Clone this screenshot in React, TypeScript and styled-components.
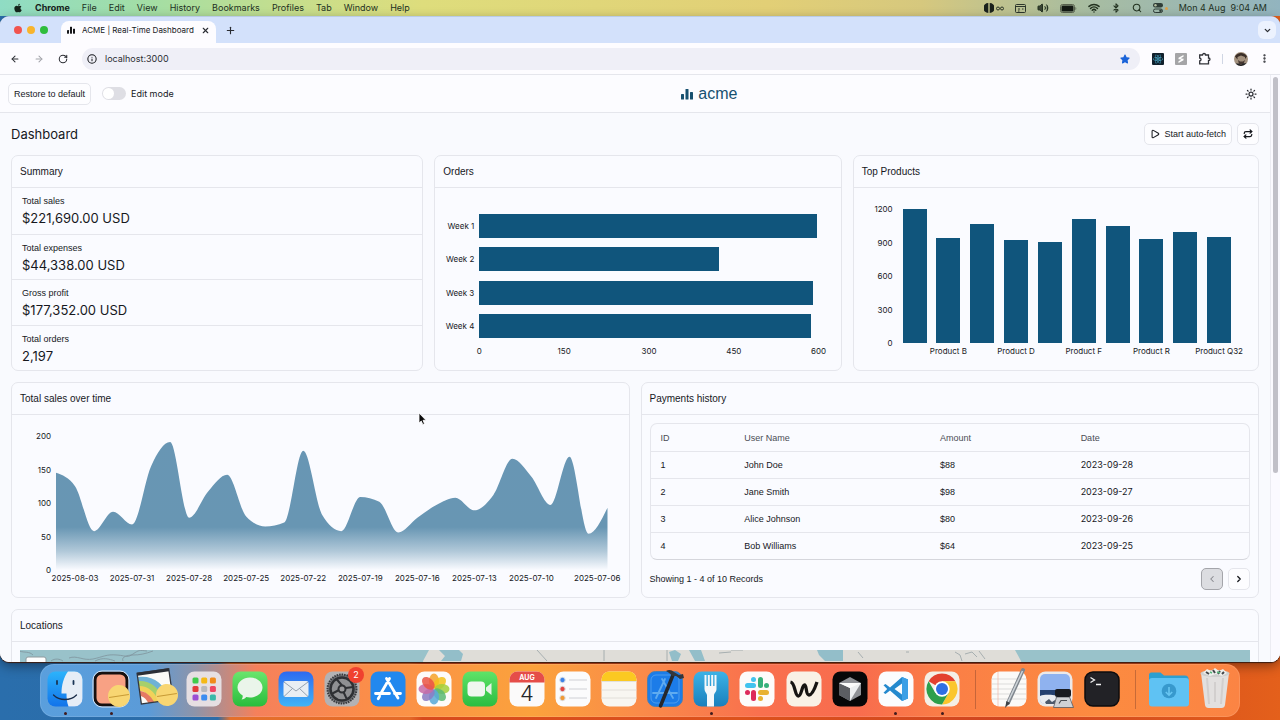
import React from 'react';
import styled, { createGlobalStyle } from 'styled-components';
import { FaApple, FaReact, FaStar } from 'react-icons/fa';
import { ArrowLeft, ArrowRight, RotateCw, Info, X, Plus, ChevronDown, ChevronLeft, ChevronRight, Play, Repeat, Sun, Search, Bluetooth, Wifi, Volume2, MoreVertical } from 'lucide-react';

const ink = '#16181d';
const line = '#e5e6ec';
const brand = '#10557c';
const textFont = '"Liberation Sans", Arial, sans-serif';

const GlobalStyle = createGlobalStyle`
  * { box-sizing: border-box; }
  body { margin: 0; font-family: Inter, "Liberation Sans", sans-serif; color: ${ink}; }
  button { font: inherit; color: inherit; padding: 0; cursor: pointer; }
  h1, h2, p, dl, dd { margin: 0; font-weight: 400; }
  a { color: inherit; text-decoration: none; }
  svg { display: block; flex: none; }
`;

/* ---------- desktop ---------- */

const Desktop = styled.div`
  position: relative;
  height: 100vh;
  min-height: 480px;
  display: flex;
  flex-direction: column;
  overflow: hidden;
  padding-bottom: 3px;
  background:
    linear-gradient(90deg, #2a6eac 0, #2c6ca8 17%, #e5702b 18%, #e46a28 32%, #d84a1c 33%, #dd521c 58%, #cf4420 80%, #e4601b 100%);
`;

const MenuBar = styled.header`
  display: flex;
  justify-content: space-between;
  align-items: center;
  height: 16px;
  flex: none;
  padding: 0 13px;
  font-size: 9px;
  line-height: 16px;
  color: #22311f;
  background: linear-gradient(90deg, #8fdcc4 0, #a4dea4 12%, #c4de8e 22%, #dedd7c 33%, #e2cf76 60%, #d6c87e 72%, #a9bd9f 84%, #92b4bf 100%);
`;

const MenuGroup = styled.nav`
  display: flex;
  align-items: center;
  gap: 12px;
  a:first-of-type { font-weight: 700; color: #14201a; }
`;

const StatusGroup = styled.div`
  display: flex;
  align-items: center;
  gap: 11px;
`;

const StatusPair = styled.div`
  display: flex;
  align-items: center;
  gap: 2px;
`;

const Clock = styled.time`
  white-space: pre;
`;

/* ---------- browser ---------- */

const BrowserWindow = styled.div`
  flex: 1;
  min-height: 0;
  display: flex;
  flex-direction: column;
  overflow: hidden;
  border-radius: 9px;
  border-top: 1px solid #b9cbe6;
  background: #fdfcff;
  box-shadow: 0 1px 1px #3b1c10, 0 4px 12px rgba(0, 0, 0, 0.4);
`;

const TabStrip = styled.div`
  display: flex;
  align-items: flex-end;
  justify-content: space-between;
  height: 26px;
  flex: none;
  padding: 0 4px 0 14px;
  background: #d3e1fb;
`;

const TabArea = styled.div`
  display: flex;
  align-items: flex-end;
`;

const Lights = styled.div`
  display: flex;
  gap: 5px;
  height: 26px;
  align-items: center;
  margin-right: 13px;
`;

const Light = styled.button<{ $tone: string }>`
  width: 8px;
  height: 8px;
  border: 0;
  border-radius: 50%;
  background: ${p => p.$tone};
`;

const Tab = styled.div`
  display: flex;
  align-items: center;
  gap: 7px;
  height: 22px;
  padding: 0 6px 4px;
  border-radius: 8px 8px 0 0;
  background: #fdfcff;
  font-size: 8px;
  white-space: nowrap;
`;

const PlainButton = styled.button`
  display: flex;
  align-items: center;
  justify-content: center;
  border: 0;
  background: none;
  color: #2b2d33;
`;

const NewTab = styled(PlainButton)`
  height: 26px;
  margin-left: 9px;
`;

const TabSearch = styled(PlainButton)`
  width: 18px;
  height: 18px;
  margin-bottom: 4px;
  border-radius: 6px;
  background: #ecf2fe;
`;

const Toolbar = styled.div`
  display: flex;
  align-items: center;
  height: 32px;
  flex: none;
  padding: 0 10px 0 10px;
  border-bottom: 1px solid ${line};
`;

const NavButtons = styled.div`
  display: flex;
  gap: 14px;
  margin-right: 14px;
`;

const AddressBar = styled.label`
  flex: 1;
  display: flex;
  align-items: center;
  gap: 8px;
  height: 22px;
  padding: 0 10px 0 5px;
  border-radius: 11px;
  background: #efeff7;
`;

const AddressInput = styled.input`
  flex: 1;
  min-width: 0;
  border: 0;
  outline: 0;
  padding: 0;
  background: none;
  color: #2c2e34;
  font: 9px Inter, sans-serif;
`;

const Extensions = styled.div`
  display: flex;
  align-items: center;
  gap: 11px;
  margin-left: 12px;
`;

const ToolDivider = styled.span`
  width: 1px;
  height: 10px;
  background: #d0d6e4;
`;

/* ---------- app shell ---------- */

const Page = styled.div`
  flex: 1;
  min-height: 0;
  display: flex;
  background: #f9fafe;
`;

const Scroller = styled.div`
  flex: 1;
  min-width: 0;
  overflow-y: auto;
  scrollbar-width: none;
`;

const ScrollTrack = styled.div`
  width: 10px;
  padding: 2px;
  border-left: 1px solid #ececf2;
  background: #fbfaff;
`;

const ScrollThumb = styled.div`
  height: 68%;
  border-radius: 3px;
  background: #c1c0c8;
`;

const AppHeader = styled.header`
  display: flex;
  align-items: center;
  justify-content: space-between;
  height: 38px;
  padding: 0 13px 0 8px;
  border-bottom: 1px solid ${line};
  background: #fcfcff;
`;

const HeaderGroup = styled.div`
  display: flex;
  align-items: center;
  gap: 11px;
`;

const OutlineButton = styled.button<{ $square?: boolean }>`
  display: flex;
  align-items: center;
  justify-content: center;
  gap: 4px;
  height: 22px;
  width: ${p => (p.$square ? '22px' : 'auto')};
  padding: ${p => (p.$square ? '0' : '0 5px')};
  border: 1px solid ${line};
  border-radius: 5px;
  background: #fdfdff;
  font: 9px ${textFont};
  white-space: nowrap;
  &:disabled {
    border-color: #a4a5aa;
    background: #dcdde1;
    color: #85868c;
  }
`;

const SwitchLabel = styled.label`
  display: flex;
  align-items: center;
  gap: 5px;
  font-size: 9px;
`;

const Switch = styled.input`
  appearance: none;
  width: 24px;
  height: 13px;
  margin: 0;
  padding: 1px;
  border-radius: 7px;
  background: #dedee4;
  &::before {
    content: '';
    display: block;
    width: 11px;
    height: 11px;
    border-radius: 50%;
    background: #fff;
  }
  &:checked::before { margin-left: 11px; }
`;

const Brand = styled.a`
  display: flex;
  align-items: center;
  gap: 5px;
  color: #17506f;
  font: 16px/20px ${textFont};
`;

const Content = styled.main`
  padding: 0 11px 11px;
`;

const TitleRow = styled.div`
  display: flex;
  align-items: center;
  justify-content: space-between;
  height: 42px;
`;

const Title = styled.h1`
  font-size: 13px;
  line-height: 20px;
`;

const Actions = styled.div`
  display: flex;
  gap: 5px;
`;

const Row = styled.div<{ $columns: string }>`
  display: grid;
  grid-template-columns: ${p => p.$columns};
  gap: 11px;
  margin-bottom: 11px;
`;

const Card = styled.section<{ $height?: number }>`
  display: flex;
  flex-direction: column;
  min-width: 0;
  min-height: ${p => p.$height ?? 216}px;
  border: 1px solid ${line};
  border-radius: 7px;
  background: #fafbff;
`;

const CardTitle = styled.h2`
  height: 32px;
  padding: 0 8px;
  border-bottom: 1px solid ${line};
  font: 10px/32px ${textFont};
`;

/* ---------- summary ---------- */

const Stats = styled.dl`
  flex: 1;
  display: grid;
  grid-template-rows: repeat(4, 1fr);
`;

const Stat = styled.div`
  padding: 7px 10px 0;
  & + & { border-top: 1px solid ${line}; }
`;

const StatLabel = styled.dt`
  font: 9px/12px ${textFont};
`;

const StatValue = styled.dd`
  padding-top: 1px;
  font-size: 13px;
  line-height: 20px;
`;

/* ---------- charts ---------- */

const Chart = styled.div<{ $axis: number; $left: number; $right: number }>`
  display: grid;
  grid-template-columns: ${p => p.$axis}px 1fr;
  grid-template-rows: 134px 16px;
  padding: 21px ${p => p.$right}px 0 ${p => p.$left}px;
  font-size: 8px;
  line-height: 10px;
`;

const BandLabels = styled.div`
  display: grid;
  grid-template-rows: repeat(4, 1fr);
  align-items: center;
  justify-items: end;
  padding-right: 5px;
  white-space: nowrap;
`;

const HorizontalPlot = styled.div`
  display: grid;
  grid-template-rows: repeat(4, 1fr);
  align-items: center;
`;

const HorizontalBar = styled.div`
  height: 24px;
  background: ${brand};
`;

const ValueTicks = styled.div<{ $pad: number }>`
  display: flex;
  flex-direction: column;
  justify-content: space-between;
  align-items: flex-end;
  padding-right: ${p => p.$pad}px;
`;

const ValueTick = styled.span`
  display: flex;
  align-items: center;
  height: 0;
`;

const BottomTicks = styled.div`
  grid-column: 2;
  display: flex;
  justify-content: space-between;
  align-items: center;
`;

const BottomTick = styled.span`
  display: flex;
  justify-content: center;
  width: 0;
  white-space: nowrap;
`;

const VerticalPlot = styled.div`
  display: grid;
  grid-template-columns: repeat(10, 1fr);
  align-items: end;
  justify-items: center;
`;

const VerticalBar = styled.div`
  width: 24px;
  background: ${brand};
`;

const BandTicks = styled.div`
  grid-column: 2;
  display: grid;
  grid-template-columns: repeat(10, 1fr);
  align-items: center;
  justify-items: center;
`;

const DateTicks = styled.div`
  grid-column: 2;
  display: grid;
  grid-template-columns: repeat(29, minmax(0, 1fr));
  align-items: center;
`;

const DateTick = styled.span<{ $column: number; $last: boolean }>`
  grid-column: ${p => p.$column};
  grid-row: 1;
  display: flex;
  justify-content: ${p => (p.$last ? 'flex-end' : 'center')};
  width: ${p => (p.$last ? '32px' : '0')};
  white-space: nowrap;
`;

const AreaSvg = styled.svg`
  width: 100%;
  height: 134px;
`;

/* ---------- payments ---------- */

const PaymentsBody = styled.div`
  padding: 8px 8px 0;
`;

const TableFrame = styled.div`
  border: 1px solid ${line};
  border-bottom-color: #d5d6dc;
  border-radius: 7px;
`;

const Table = styled.table`
  width: 100%;
  table-layout: fixed;
  border-spacing: 0;
  th, td {
    height: 27px;
    padding: 0 10px;
    text-align: left;
    font: 9px/12px ${textFont};
  }
  th { color: #4b4d55; }
  td { border-top: 1px solid ${line}; }
  td:last-child { font-family: Inter, sans-serif; }
`;

const PaymentsFooter = styled.div`
  display: flex;
  align-items: center;
  justify-content: space-between;
  height: 37px;
  font: 9px ${textFont};
`;

const MapFrame = styled.div`
  flex: 1;
  padding: 8px;
`;

const MapSvg = styled.svg`
  width: 100%;
  height: 360px;
`;

/* ---------- dock ---------- */

const Dock = styled.nav`
  display: flex;
  height: 53px;
  flex: none;
  margin: 2px 40px 0;
  padding: 2px 2px 0;
  border-radius: 14px;
  background: linear-gradient(90deg, #5a9fdd 0, #5b9bd8 9%, #8f94a8 13%, #f5805b 18%, #fb8d4a 27%, #fba23c 41%, #fa8b49 50%, #f9704e 60%, #f86c4e 68%, #fb7f46 76%, #fc8b40 88%, #fb8444 100%);
  box-shadow: inset 0 0 0 1px rgba(255, 255, 255, 0.12);
`;

const DockItem = styled.button`
  position: relative;
  flex: 1;
  min-width: 0;
  display: flex;
  flex-direction: column;
  align-items: center;
  border: 0;
  background: none;
`;

const RunningDot = styled.span`
  width: 3px;
  height: 3px;
  border-radius: 50%;
  background: #3f1a1c;
`;

const DockDivider = styled.span`
  width: 1px;
  height: 39px;
  margin: 4px 10px 0;
  background: rgba(120, 60, 40, 0.4);
`;

const Badge = styled.span`
  position: absolute;
  top: 1px;
  right: 1px;
  width: 16px;
  height: 16px;
  border-radius: 50%;
  background: #f0412f;
  color: #fff;
  font-size: 9px;
  line-height: 16px;
  text-align: center;
`;

const Pointer = styled.svg`
  position: absolute;
  left: 418px;
  top: 412px;
`;

/* ---------- data ---------- */

const menus = ['Chrome', 'File', 'Edit', 'View', 'History', 'Bookmarks', 'Profiles', 'Tab', 'Window', 'Help'];

const stats = [
  ['Total sales', '$221,690.00 USD'],
  ['Total expenses', '$44,338.00 USD'],
  ['Gross profit', '$177,352.00 USD'],
  ['Total orders', '2,197'],
];

const orders = [
  { week: 'Week 1', value: 597 },
  { week: 'Week 2', value: 423 },
  { week: 'Week 3', value: 590 },
  { week: 'Week 4', value: 587 },
];

const products = [
  { value: 1198 }, { value: 938, label: 'Product B' },
  { value: 1062 }, { value: 924, label: 'Product D' },
  { value: 903 }, { value: 1112, label: 'Product F' },
  { value: 1050 }, { value: 930, label: 'Product R' },
  { value: 990 }, { value: 948, label: 'Product Q32' },
];

const sales = [
  145, 125, 58, 87, 68, 155, 191, 78, 117, 142, 80, 65, 71, 178, 82,
  58, 109, 102, 56, 78, 97, 108, 89, 112, 166, 139, 97, 169, 54, 93,
];

const dates = ['2025-08-03', '2025-07-31', '2025-07-28', '2025-07-25', '2025-07-22', '2025-07-19', '2025-07-16', '2025-07-13', '2025-07-10', '2025-07-06'];

const payments = [
  [1, 'John Doe', '$88', '2023-09-28'],
  [2, 'Jane Smith', '$98', '2023-09-27'],
  [3, 'Alice Johnson', '$80', '2023-09-26'],
  [4, 'Bob Williams', '$64', '2023-09-25'],
];

/* Monotone cubic interpolation, so that peaks never overshoot the data. */
function monotonePath(points: [number, number][]) {
  const n = points.length;
  const slope = points.slice(1).map((p, i) => (p[1] - points[i][1]) / (p[0] - points[i][0]));
  const tangent = points.map((_, i) => {
    if (i === 0 || i === n - 1) return 0;
    const a = slope[i - 1];
    const b = slope[i];
    if (a * b <= 0) return 0;
    return Math.sign(a) * Math.min(Math.abs(a), Math.abs(b), Math.abs(a + b) / 4) * 2;
  });
  tangent[0] = (3 * slope[0] - tangent[1]) / 2;
  tangent[n - 1] = (3 * slope[n - 2] - tangent[n - 2]) / 2;
  let d = `M${points[0][0]},${points[0][1]}`;
  for (let i = 0; i < n - 1; i++) {
    const [x0, y0] = points[i];
    const [x1, y1] = points[i + 1];
    const t = (x1 - x0) / 3;
    d += `C${x0 + t},${y0 + t * tangent[i]} ${x1 - t},${y1 - t * tangent[i + 1]} ${x1},${y1}`;
  }
  return d;
}

const salesCurve = monotonePath(sales.map((v, i) => [(i * 580) / 29, 200 - v]));

/* ---------- dock artwork, each on a 46 x 46 board ---------- */

const Tile = ({ fill, stroke }: { fill: string; stroke?: string }) => (
  <rect x="5.5" y="5.5" width="35" height="35" rx="8" fill={fill} stroke={stroke} />
);

const Coin = ({ x, y }: { x: number; y: number }) => (
  <g transform={`rotate(-8 ${x} ${y})`}>
    <circle cx={x} cy={y} r="11" fill="#f8d672" />
    <path d={`M${x - 10},${y} h20`} stroke="#c79a35" strokeWidth="1" />
  </g>
);

const petals = ['#f6a32b', '#f3c11c', '#a3cf3c', '#5bb974', '#58a9d8', '#8a7cc4', '#c76ba6', '#ea5545'];
const launchColors = ['#3ecb4b', '#f5b916', '#f08a1c', '#e23b3b', '#b8b9bd', '#ee4664', '#9b4fd4', '#3c8df0', '#38b9a9'];

const art: Record<string, React.ReactNode> = {
  Finder: (
    <>
      <defs>
        <linearGradient id="finder" x2="0" y2="1"><stop stopColor="#2cb3fb" /><stop offset="1" stopColor="#1273ea" /></linearGradient>
      </defs>
      <Tile fill="url(#finder)" />
      <path d="M26 5.500H32.500a8 8 0 0 1 8 8v19a8 8 0 0 1-8 8h-6c-1.500-4-2-8-2-13h-5c0-8 2-16 6.500-22z" fill="#e6edf6" />
      <path d="M15 15v3M31.500 15v3" stroke="#1a3556" strokeWidth="1.800" strokeLinecap="round" />
      <path d="M11.500 29c6 6 17 6 23 0" fill="none" stroke="#1a2c48" strokeWidth="1.300" strokeLinecap="round" />
    </>
  ),
  Screenshot: (
    <>
      <rect x="7" y="7" width="32" height="32" rx="7" fill="#f8a184" stroke="#17100f" strokeWidth="3" />
      <rect x="5" y="5" width="36" height="36" rx="9" fill="none" stroke="#d8e5f5" />
      <Coin x={31} y={30} />
    </>
  ),
  Preview: (
    <>
      <g transform="rotate(-8 20 20)">
        <path d="M5 5h32v31H5z" fill="#fbfbf7" />
        <path d="M5 9c15 0 25 9 29 27h-8C23 24 16 17 5 16z" fill="#6fb2d6" />
        <path d="M5 13c12 1 19 8 23 23h-6C19 27 14 20 5 19z" fill="#a6cf6b" />
        <path d="M5 18c9 1 14 7 18 18h-6c-3-8-7-12-12-13z" fill="#f2d15a" />
        <path d="M5 23c6 1 10 6 13 13h-6c-2-5-4-7-7-8z" fill="#e57a63" />
        <path d="M5 5h32v31H5z" fill="none" stroke="#35383f" strokeWidth="1.300" />
        <path d="M5 6h32" stroke="#2c2f36" strokeWidth="3" />
      </g>
      <Coin x={33} y={29} />
    </>
  ),
  Launchpad: (
    <>
      <Tile fill="#e6dfe2" />
      {launchColors.map((c, i) => (
        <rect key={c} x={11.5 + (i % 3) * 8.700} y={11.500 + Math.floor(i / 3) * 8.500} width="6" height="6" rx="1.500" fill={c} />
      ))}
    </>
  ),
  Messages: (
    <>
      <defs>
        <linearGradient id="messages" x2="0" y2="1"><stop stopColor="#6be56d" /><stop offset="1" stopColor="#28bd3c" /></linearGradient>
      </defs>
      <Tile fill="url(#messages)" />
      <path d="M23 11.500c7 0 12.500 4.500 12.500 10S30 31.500 23 31.500c-1.500 0-2.600-.2-3.800-.5-1 1.500-2.700 2.300-4.700 2.500 1-1.200 1.300-2.500 1.200-4-3-1.800-5.200-4.600-5.200-8 0-5.500 5.500-10 12.500-10z" fill="#eaf5ea" />
    </>
  ),
  Mail: (
    <>
      <defs>
        <linearGradient id="mail" x2="0" y2="1"><stop stopColor="#2d6af0" /><stop offset="1" stopColor="#40b4f7" /></linearGradient>
      </defs>
      <Tile fill="url(#mail)" />
      <rect x="10.500" y="15" width="25" height="16" rx="2" fill="#e9eef3" />
      <path d="M11 16l12 9 12-9M11 30.500l8.500-8M35 30.500l-8.500-8" fill="none" stroke="#8b98a8" strokeWidth=".9" />
    </>
  ),
  Settings: (
    <>
      <Tile fill="#b3b2b4" />
      <circle cx="23" cy="23" r="14.500" fill="#77797d" stroke="#37393d" strokeWidth="2" strokeDasharray="1.500 1" />
      <circle cx="23" cy="23" r="11.500" fill="#8f9093" stroke="#2e3034" strokeWidth="2.500" />
      <circle cx="23" cy="23" r="3.500" fill="#9b9b9d" stroke="#2e3034" strokeWidth="2" />
      <path d="M23 19.500L17.500 13M26.500 22l8-1M24.500 26l3.500 7.500M20 24l-7.500 4" stroke="#2e3034" strokeWidth="2" />
    </>
  ),
  'App Store': (
    <>
      <Tile fill="#2288ee" />
      <path d="M24.500 12.500L15.500 28M21.500 12.500L33 32M10.500 27.500h14M29.500 27.500h6M14.500 30.500l-1.300 2.200" stroke="#fff" strokeWidth="2.800" strokeLinecap="round" />
    </>
  ),
  Photos: (
    <>
      <Tile fill="#fdfbf9" />
      {petals.map((c, i) => (
        <ellipse key={c} cx="23" cy="15" rx="5" ry="7.500" fill={c} opacity=".86" transform={`rotate(${i * 45} 23 23)`} />
      ))}
    </>
  ),
  FaceTime: (
    <>
      <defs>
        <linearGradient id="facetime" x2="0" y2="1"><stop stopColor="#5fe368" /><stop offset="1" stopColor="#2bbd41" /></linearGradient>
      </defs>
      <Tile fill="url(#facetime)" />
      <rect x="10.500" y="15.500" width="17.500" height="15" rx="4" fill="#f0f7f0" />
      <path d="M29 21.500l5.500-4.500v12L29 24.500z" fill="#e5f3e6" />
    </>
  ),
  Calendar: (
    <>
      <Tile fill="#fbfafa" />
      <path d="M5.500 16.500v-3a8 8 0 0 1 8-8h19a8 8 0 0 1 8 8v3z" fill="#e54d49" />
      <text x="23" y="14" fontSize="7" fontWeight="700" fill="#fff" textAnchor="middle">AUG</text>
      <text x="23" y="35" fontSize="22" fontWeight="300" fill="#25262a" textAnchor="middle">4</text>
    </>
  ),
  Reminders: (
    <>
      <Tile fill="#fbfbfc" />
      {['#3b82e8', '#e2443f', '#f09a36'].map((c, i) => (
        <g key={c}>
          <circle cx="12.500" cy={14 + i * 9} r="2.700" fill={c} stroke="#dcdfe5" strokeWidth="1" />
          <path d={`M19 ${14 + i * 9}h18`} stroke="#c5c6cb" strokeWidth=".8" />
        </g>
      ))}
    </>
  ),
  Notes: (
    <>
      <Tile fill="#f8f6f1" />
      <path d="M5.500 15v-1.500a8 8 0 0 1 8-8h19a8 8 0 0 1 8 8V15z" fill="#fbc921" />
      <path d="M5.500 15.500h35M5.500 24h35M5.500 32h35" stroke="#dcdad4" strokeWidth=".8" />
    </>
  ),
  Xcode: (
    <>
      <Tile fill="#1c7ce8" stroke="#4e7fae" />
      <rect x="9" y="9" width="28" height="28" rx="5" fill="none" stroke="#5ba5ee" strokeWidth=".8" />
      <path d="M23 13L14 32M20 13l11 19M11 27h24" stroke="#5fabf0" strokeWidth="1.800" strokeLinecap="round" />
      <path d="M31 9L18.500 40" stroke="#25282d" strokeWidth="3.500" strokeLinecap="round" />
      <path d="M24 5c3-2 6-1 8 1l5 3 4-1 1 4-4 1-4-3-4 0c-1-2-3-3-6-5z" fill="#33363c" />
    </>
  ),
  Fork: (
    <>
      <defs>
        <linearGradient id="fork" x2="0" y2="1"><stop stopColor="#3cb2e6" /><stop offset="1" stopColor="#1a80bd" /></linearGradient>
      </defs>
      <Tile fill="url(#fork)" />
      <path d="M16.500 9h2v11h1.300V9h2v11h1.400V9h2v11h1.300V9h2v14c0 3-2 3.500-2.500 6v11.500h-7V29c-.5-2.500-2.500-3-2.500-6z" fill="#f5f8fa" />
    </>
  ),
  Slack: (
    <>
      <Tile fill="#fdfbfa" />
      <g strokeWidth="5" strokeLinecap="round">
        <path d="M13.500 19.500h6" stroke="#42c3ee" /><path d="M19.500 13.500v.1" stroke="#42c3ee" />
        <path d="M26.500 13.500v6" stroke="#36b07a" /><path d="M32.500 19.500v.1" stroke="#36b07a" />
        <path d="M26.500 26.500h6" stroke="#e8b132" /><path d="M26.500 32.500v.1" stroke="#e8b132" />
        <path d="M19.500 26.500v6" stroke="#dd2a5b" /><path d="M13.500 26.500v.1" stroke="#dd2a5b" />
      </g>
    </>
  ),
  Wispr: (
    <>
      <Tile fill="#f9f1e5" />
      <path d="M9.500 16c5 1 4 14 8 14 3 0 3.500-11 6-11s1 10 4.500 10S34 22 36 16" fill="none" stroke="#161412" strokeWidth="3.300" />
    </>
  ),
  Cursor: (
    <>
      <Tile fill="#070708" />
      <path d="M23 11l11 6v12l-11 6-11-6V17z" fill="#8f9196" />
      <path d="M12 17h22L23 35z" fill="#eceef0" />
      <path d="M12 17l11 5v13l-11-6z" fill="#5c5e63" />
      <path d="M12 17h22l-11 5z" fill="#fbfbfb" />
    </>
  ),
  'Visual Studio Code': (
    <>
      <Tile fill="#fbfcfe" />
      <path d="M29 11l6 2.500v19L29 35 17 24.500 12.500 28l-2-1.200 3.700-3.800-3.700-3.800 2-1.200 4.500 3.500zM29 17.500L21.500 23l7.500 5.500z" fill="#2489ce" fillRule="evenodd" />
      <path d="M29 11l6 2.500v19L29 35z" fill="#3a9fe6" />
    </>
  ),
  'Google Chrome': (
    <>
      <Tile fill="#f4efe6" />
      <path d="M23 23L9.600 15.300A15.400 15.400 0 0 1 36.400 15.300H23z" fill="#e3402f" />
      <path d="M23 15.300h13.400A15.400 15.400 0 0 1 23 38.400l6.700-11.600z" fill="#fbc62d" />
      <path d="M9.600 15.300A15.400 15.400 0 0 0 23 38.400l6.700-11.600H16.300z" fill="#2d9f4c" />
      <circle cx="23" cy="23" r="7.700" fill="#fff" />
      <circle cx="23" cy="23" r="6" fill="#2f6fe3" />
    </>
  ),
  TextEdit: (
    <>
      <Tile fill="#fbfaf8" />
      <path d="M6 13h34M6 18h34M6 23h34M6 28h34M6 33h34" stroke="#d0ced0" strokeWidth=".7" />
      <path d="M12 6v34" stroke="#f0b6a8" strokeWidth=".7" />
      <path d="M37 4L22 37" stroke="#7f868d" strokeWidth="4" strokeLinecap="round" />
      <path d="M36.500 5L22 36" stroke="#cdd3d8" strokeWidth="1.500" />
      <path d="M20.500 35l3.500 2-5 5z" fill="#3e4246" />
    </>
  ),
  Pictures: (
    <>
      <Tile fill="#ece9e9" />
      <rect x="8" y="8" width="30" height="30" rx="5" fill="#8fb2ef" />
      <path d="M8 24h30v7H8z" fill="#24406f" />
      <path d="M8 30c8-3 17 1 30-1v4a5 5 0 0 1-5 5H13a5 5 0 0 1-5-5z" fill="#e9ecf1" />
      <path d="M13 36l4-3 3 3 3-2 2 4H14z" fill="#4b586b" />
      <path d="M24.500 31h13l4 10.500h-20z" fill="#cfd1d4" stroke="#55585f" strokeWidth=".8" />
      <rect x="23" y="23" width="16" height="8" rx="2" fill="#191b20" />
      <path d="M27 37.500l2-3h6" fill="none" stroke="#4c4f55" strokeWidth="1.200" />
    </>
  ),
  Terminal: (
    <>
      <rect x="6" y="6" width="34" height="34" rx="8" fill="#222226" stroke="#0c0c0e" strokeWidth="1.500" />
      <path d="M11.500 11.500l4 2.500-4 2.500M17 18.500h5" fill="none" stroke="#f2f2f2" strokeWidth="1.300" />
    </>
  ),
  Downloads: (
    <>
      <path d="M3 9a2.500 2.500 0 0 1 2.500-2.500h9L18 9.500h21A3.500 3.500 0 0 1 42.500 13v5H3z" fill="#2d9fd0" />
      <rect x="3" y="12" width="40" height="28.500" rx="3" fill="#5fc2f3" />
      <circle cx="23" cy="25" r="7.300" fill="#3799cd" />
      <path d="M23 21v8M19.800 26l3.200 3.200 3.200-3.200" fill="none" stroke="#68c6f2" strokeWidth="1.600" />
    </>
  ),
  Trash: (
    <>
      <path d="M9 7h28l-4 32c-.3 2-1.500 3-3.500 3h-13c-2 0-3.200-1-3.500-3z" fill="#e2e0df" />
      <path d="M15 12l2 26M31 12l-2 26M23 16v20" stroke="#d2cfce" strokeWidth="2" />
      <ellipse cx="23" cy="7.500" rx="14.500" ry="3.500" fill="#cfcfcf" />
      <path d="M11 7l4-4 4 2 4-3 4 3 4-2 4 4-5 3-6-2-6 2z" fill="#efefec" />
      <path d="M14 6l3 2M21 4l2 3M28 5l-2 3M32 6l-2 2" stroke="#43464a" strokeWidth="2" />
      <path d="M18 6l2 1M25 6l3 1" stroke="#57b77c" strokeWidth="1.500" />
    </>
  ),
};

const dock = [
  ['Finder', 'Screenshot', 'Preview', 'Launchpad', 'Messages', 'Mail', 'Settings', 'App Store', 'Photos', 'FaceTime', 'Calendar', 'Reminders', 'Notes', 'Xcode', 'Fork', 'Slack', 'Wispr', 'Cursor', 'Visual Studio Code', 'Google Chrome'],
  ['TextEdit', 'Pictures', 'Terminal'],
  ['Downloads', 'Trash'],
];
const running = ['Finder', 'Screenshot', 'Fork', 'Visual Studio Code', 'Google Chrome'];

const BarsGlyph = ({ size, color }: { size: number; color: string }) => (
  <svg width={size} height={size} viewBox="0 0 12 12" fill={color} aria-hidden="true">
    <rect x="0" y="6" width="3" height="5.500" rx=".6" />
    <rect x="4.500" y="1" width="3" height="10.500" rx=".6" />
    <rect x="9" y="4" width="3" height="7.500" rx=".6" />
  </svg>
);

const MenuBarView = () => (
  <MenuBar>
    <MenuGroup aria-label="Menu bar">
      <FaApple size={10} color="#15241b" />
      {menus.map(m => <a key={m} href="#">{m}</a>)}
    </MenuGroup>
    <StatusGroup>
      <StatusPair>
        <svg width="10" height="10" viewBox="0 0 10 10"><path d="M4.300 0v10a5 5 0 0 1 0-10zM5.700 0v10a5 5 0 0 0 0-10z" fill="#1a211c" /></svg>
        <svg width="8" height="5" viewBox="0 0 8 5" fill="none" stroke="#2b3529"><circle cx="2" cy="2.500" r="1.500" /><circle cx="6" cy="2.500" r="1.500" /></svg>
      </StatusPair>
      <svg width="11" height="9" viewBox="0 0 11 9" fill="none" stroke="#2c352b"><rect x=".5" y=".5" width="10" height="8" rx="1" /><path d="M1 2.500h9M3 5h2M7 5h1.500M3 7h1.500" /></svg>
      <Volume2 size={12} fill="#3a4434" />
      <svg width="17" height="9" viewBox="0 0 17 9"><rect x=".5" y=".5" width="14" height="8" rx="2" fill="none" stroke="#59624f" /><rect x="1.500" y="1.500" width="12" height="6" rx="1.200" fill="#141a14" /><path d="M15.500 3v3c1-.5 1-2.500 0-3z" fill="#59624f" /></svg>
      <Wifi size={12} strokeWidth={3} />
      <Bluetooth size={10} strokeWidth={2.500} />
      <Search size={10} strokeWidth={2.500} />
      <StatusPair>
        <svg width="10" height="10" viewBox="0 0 10 10"><rect width="10" height="4.500" rx="2.200" fill="#303e38" /><circle cx="2.500" cy="2.200" r="1.200" fill="#b5bfa2" /><rect x=".5" y="6" width="9" height="3.500" rx="1.700" fill="none" stroke="#303e38" /><circle cx="7.500" cy="7.700" r="1.300" fill="#303e38" /></svg>
        <svg width="3" height="3" viewBox="0 0 3 3"><circle cx="1.500" cy="1.500" r="1.500" fill="#dda24c" /></svg>
      </StatusPair>
      <Clock>Mon 4 Aug  9:04 AM</Clock>
    </StatusGroup>
  </MenuBar>
);

const BrowserChrome = () => (
  <>
    <TabStrip>
      <TabArea>
        <Lights>
          <Light $tone="#f1544f" aria-label="Close window" />
          <Light $tone="#f8b42c" aria-label="Minimise window" />
          <Light $tone="#2ebd3c" aria-label="Zoom window" />
        </Lights>
        <Tab>
          <BarsGlyph size={8} color="#17181b" />
          ACME | Real-Time Dashboard
          <PlainButton aria-label="Close tab"><X size={9} strokeWidth={3} /></PlainButton>
        </Tab>
        <NewTab aria-label="New tab"><Plus size={11} strokeWidth={2.500} /></NewTab>
      </TabArea>
      <TabSearch aria-label="Search tabs"><ChevronDown size={9} strokeWidth={3.500} /></TabSearch>
    </TabStrip>
    <Toolbar>
      <NavButtons>
        <PlainButton aria-label="Back"><ArrowLeft size={10} strokeWidth={2.500} /></PlainButton>
        <PlainButton aria-label="Forward"><ArrowRight size={10} color="#a2a3a9" strokeWidth={2.500} /></PlainButton>
        <PlainButton aria-label="Reload"><RotateCw size={10} strokeWidth={2.500} /></PlainButton>
      </NavButtons>
      <AddressBar>
        <Info size={10} strokeWidth={2.500} />
        <AddressInput aria-label="Address" defaultValue="localhost:3000" />
        <PlainButton aria-label="Bookmark this page"><FaStar size={10} color="#1a63d9" /></PlainButton>
      </AddressBar>
      <Extensions>
        <svg width="12" height="12" viewBox="0 0 12 12"><rect width="12" height="12" rx="1" fill="#11202c" /><FaReact x="1" y="1" size={10} color="#4fb7d8" /></svg>
        <svg width="12" height="12" viewBox="0 0 12 12"><rect width="12" height="12" rx="1" fill="#a5a5a7" /><path d="M8.500 2L3.500 4.700v1.600l5-2.500zM8.500 5.500l-5 2.700v1.800l5-2.700zM3.500 6l5 1.300V6L5 5z" fill="#fff" /></svg>
        <svg width="13" height="13" viewBox="0 0 13 13" fill="none" stroke="#303238" strokeWidth="1.300"><path d="M1.700 3H4.500c0-2 3-2 3 0h3v3c2 0 2 2.500 0 2.500v3.300H1.700V9c1.800 0 1.800-2.800 0-2.800z" /></svg>
        <ToolDivider />
        <svg width="14" height="14" viewBox="0 0 14 14"><circle cx="7" cy="7" r="7" fill="#a3917e" /><path d="M1 4.500a7 7 0 0 1 12 0L11 7V5L7 3.500 3.500 5v2.500z" fill="#3a2e28" /><path d="M4 8l1 4 2 1 2.500-1L11 8 9 9.500H6z" fill="#453730" /><path d="M1.500 11.500A7 7 0 0 0 12.500 11L9 11.500 7 13l-2.500-1.500z" fill="#1f2226" /></svg>
        <PlainButton aria-label="Chrome menu"><MoreVertical size={11} strokeWidth={3} /></PlainButton>
      </Extensions>
    </Toolbar>
  </>
);

const OrdersChart = () => (
  <Chart $axis={37} $left={7} $right={22}>
    <BandLabels>{orders.map(o => <span key={o.week}>{o.week}</span>)}</BandLabels>
    <HorizontalPlot>
      {orders.map(o => <HorizontalBar key={o.week} style={{ width: `${o.value / 6}%` }} />)}
    </HorizontalPlot>
    <BottomTicks>{[0, 150, 300, 450, 600].map(t => <BottomTick key={t}>{t}</BottomTick>)}</BottomTicks>
  </Chart>
);

const ProductsChart = () => (
  <Chart $axis={37} $left={7} $right={22}>
    <ValueTicks $pad={5}>{[1200, 900, 600, 300, 0].map(t => <ValueTick key={t}>{t}</ValueTick>)}</ValueTicks>
    <VerticalPlot>
      {products.map((p, i) => <VerticalBar key={i} style={{ height: `${p.value / 12}%` }} />)}
    </VerticalPlot>
    <BandTicks>{products.map((p, i) => <BottomTick key={i}>{p.label}</BottomTick>)}</BandTicks>
  </Chart>
);

const SalesChart = () => (
  <Chart $axis={37} $left={7} $right={21}>
    <ValueTicks $pad={5}>{[200, 150, 100, 50, 0].map(t => <ValueTick key={t}>{t}</ValueTick>)}</ValueTicks>
    <AreaSvg viewBox="0 0 580 200" preserveAspectRatio="none" role="img" aria-label="Total sales over time">
      <defs>
        <linearGradient id="area" gradientUnits="userSpaceOnUse" x1="0" x2="0" y1="0" y2="200">
          <stop offset="0" stopColor="#6896b4" />
          <stop offset=".68" stopColor="#6896b3" />
          <stop offset=".86" stopColor="#6896b3" stopOpacity=".5" />
          <stop offset="1" stopColor="#6896b3" stopOpacity="0" />
        </linearGradient>
      </defs>
      <path d={`${salesCurve}V200H0Z`} fill="url(#area)" />
    </AreaSvg>
    <DateTicks>
      {dates.map((d, i) => (
        <DateTick key={d} $column={i === 9 ? 29 : 2 + i * 3} $last={i === 9}>{d}</DateTick>
      ))}
    </DateTicks>
  </Chart>
);

const Payments = () => (
  <PaymentsBody>
    <TableFrame>
      <Table>
        <colgroup>
          <col style={{ width: '14%' }} /><col style={{ width: '32.7%' }} /><col style={{ width: '23.5%' }} /><col />
        </colgroup>
        <thead><tr><th>ID</th><th>User Name</th><th>Amount</th><th>Date</th></tr></thead>
        <tbody>
          {payments.map(row => <tr key={row[0]}>{row.map((cell, i) => <td key={i}>{cell}</td>)}</tr>)}
        </tbody>
      </Table>
    </TableFrame>
    <PaymentsFooter>
      Showing 1 - 4 of 10 Records
      <Actions>
        <OutlineButton $square disabled aria-label="Previous page"><ChevronLeft size={10} strokeWidth={2.500} /></OutlineButton>
        <OutlineButton $square aria-label="Next page"><ChevronRight size={10} strokeWidth={3} /></OutlineButton>
      </Actions>
    </PaymentsFooter>
  </PaymentsBody>
);

const LocationsMap = () => (
  <MapSvg viewBox="0 0 1232 360" preserveAspectRatio="xMidYMin slice" role="img" aria-label="Map of locations">
    <rect width="1232" height="360" fill="#99c2ca" />
    <path d="M410 0H996l6 11 10 60-40 60-90 20-60 90-80 40-90-60-100 20-60-80-60-50-22-60-6-40z" fill="#dfddd8" />
    <path d="M420 0h20l4 4-2 7h-20l4-5zM670 0h12l4 11h-10zM798 0h26v11h-18l-6-6zM650 2l6-2 6 4-3 7h-6z" fill="#93bec9" />
    <g fill="none" stroke="#8299a1" strokeWidth=".9">
      <path d="M0 1c6 2 10 0 14 4M32 11c4-3 9-2 12 0M50 8c8-3 14 3 24 1s13-5 24-4 10 3 16-1 6-4 14-3M104 11c-2-4 4-6 10-6s12-1 20-4M76 11c8-4 14-2 20 0" />
      <path d="M518 0l10 11M585 0v11M648 0v11M700 3l12-1M712 0h12M839 2l5 6M936 2l5 3 2 6M946 4l7-2 5 5M960 1l6 8M887 2h3" stroke="#a0a9ac" />
    </g>
    <rect x="7" y="7" width="20" height="20" rx="2" fill="#fff" stroke="#8e9a9e" />
    <path d="M17 12v10M12 17h10" stroke="#333" />
  </MapSvg>
);

const DockView = () => (
  <Dock aria-label="Dock">
    {dock.map((group, g) => (
      <React.Fragment key={g}>
        {g > 0 && <DockDivider />}
        {group.map(name => (
          <DockItem key={name} aria-label={name}>
            <svg width="46" height="46" viewBox="0 0 46 46" aria-hidden="true">{art[name]}</svg>
            {running.includes(name) && <RunningDot />}
            {name === 'Settings' && <Badge>2</Badge>}
          </DockItem>
        ))}
      </React.Fragment>
    ))}
  </Dock>
);

export default function App() {
  return (
    <Desktop>
      <GlobalStyle />
      <MenuBarView />
      <BrowserWindow>
        <BrowserChrome />
        <Page>
          <Scroller>
            <AppHeader>
              <HeaderGroup>
                <OutlineButton>Restore to default</OutlineButton>
                <SwitchLabel><Switch type="checkbox" />Edit mode</SwitchLabel>
              </HeaderGroup>
              <Brand href="#"><BarsGlyph size={12} color="#17506f" />acme</Brand>
              <PlainButton aria-label="Toggle theme"><Sun size={12} strokeWidth={2.500} /></PlainButton>
            </AppHeader>
            <Content>
              <TitleRow>
                <Title>Dashboard</Title>
                <Actions>
                  <OutlineButton><Play size={10} strokeWidth={2.500} />Start auto-fetch</OutlineButton>
                  <OutlineButton $square aria-label="Refresh"><Repeat size={10} strokeWidth={3} /></OutlineButton>
                </Actions>
              </TitleRow>
              <Row $columns="413fr 408fr 407fr">
                <Card>
                  <CardTitle>Summary</CardTitle>
                  <Stats>
                    {stats.map(([label, value]) => (
                      <Stat key={label}><StatLabel>{label}</StatLabel><StatValue>{value}</StatValue></Stat>
                    ))}
                  </Stats>
                </Card>
                <Card><CardTitle>Orders</CardTitle><OrdersChart /></Card>
                <Card><CardTitle>Top Products</CardTitle><ProductsChart /></Card>
              </Row>
              <Row $columns="1fr 1fr">
                <Card><CardTitle>Total sales over time</CardTitle><SalesChart /></Card>
                <Card><CardTitle>Payments history</CardTitle><Payments /></Card>
              </Row>
              <Card $height={410}>
                <CardTitle>Locations</CardTitle>
                <MapFrame><LocationsMap /></MapFrame>
              </Card>
            </Content>
          </Scroller>
          <ScrollTrack><ScrollThumb /></ScrollTrack>
        </Page>
      </BrowserWindow>
      <DockView />
      <Pointer width="9" height="14" viewBox="0 0 9 14" aria-hidden="true">
        <path d="M1 1v10l2.300-2 1.500 3.500 1.700-.8L5 8.300h3z" fill="#0c0c0d" stroke="#fff" strokeWidth=".8" />
      </Pointer>
    </Desktop>
  );
}
